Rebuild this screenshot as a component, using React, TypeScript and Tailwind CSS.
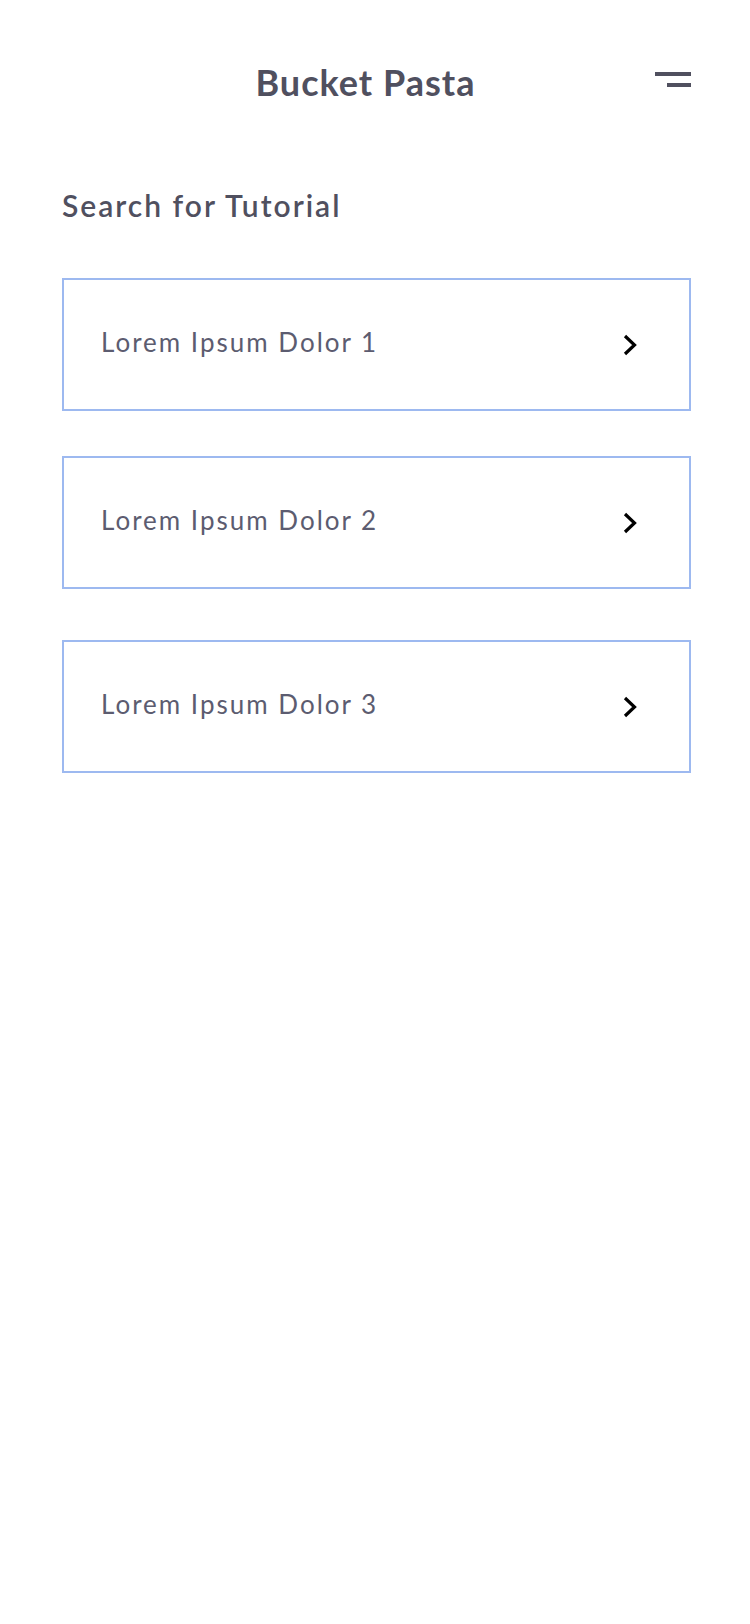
const items = [
  { label: 'Lorem Ipsum Dolor 1', gap: 'mt-[58px]' },
  { label: 'Lorem Ipsum Dolor 2', gap: 'mt-[45px]' },
  { label: 'Lorem Ipsum Dolor 3', gap: 'mt-[51px]' },
]

function Chevron() {
  return (
    <svg width="16" height="24" viewBox="0 0 16 24" fill="none">
      <path d="M3 3 L12.5 12 L3 21" stroke="#000" strokeWidth="3.2" strokeLinecap="butt" strokeLinejoin="miter" />
    </svg>
  )
}

export default function App() {
  return (
    <div className="min-h-[1624px] bg-white pl-[62px] pr-[59px] pt-[64px] font-['Lato','Noto_Sans',sans-serif]">
      <header className="relative flex h-[36px] items-center">
        <h1 className="flex-1 pl-[14px] text-center text-[36px] leading-[36px] font-bold tracking-[1px] text-[#50505f]">Bucket Pasta</h1>
        <button className="flex w-[36px] flex-col items-end gap-[7px] self-start pt-[8px]">
          <span className="block h-[4px] w-[36px] bg-[#50505f]" />
          <span className="block h-[4px] w-[24px] bg-[#50505f]" />
        </button>
      </header>

      <h2 className="mt-[90px] text-[30px] leading-[30px] font-semibold tracking-[2px] text-[#50505f]">Search for Tutorial</h2>

      <div className="flex flex-col">
        {items.map(item => (
          <div
            key={item.label}
            className={`${item.gap} flex h-[133px] items-center justify-between border-2 border-[#9db9f0] pl-[37px] pr-[51px]`}
          >
            <span className="mb-[6px] text-[26px] leading-[26px] tracking-[2px] text-[#5c5c70]">{item.label}</span>
            <Chevron />
          </div>
        ))}
      </div>
    </div>
  )
}
